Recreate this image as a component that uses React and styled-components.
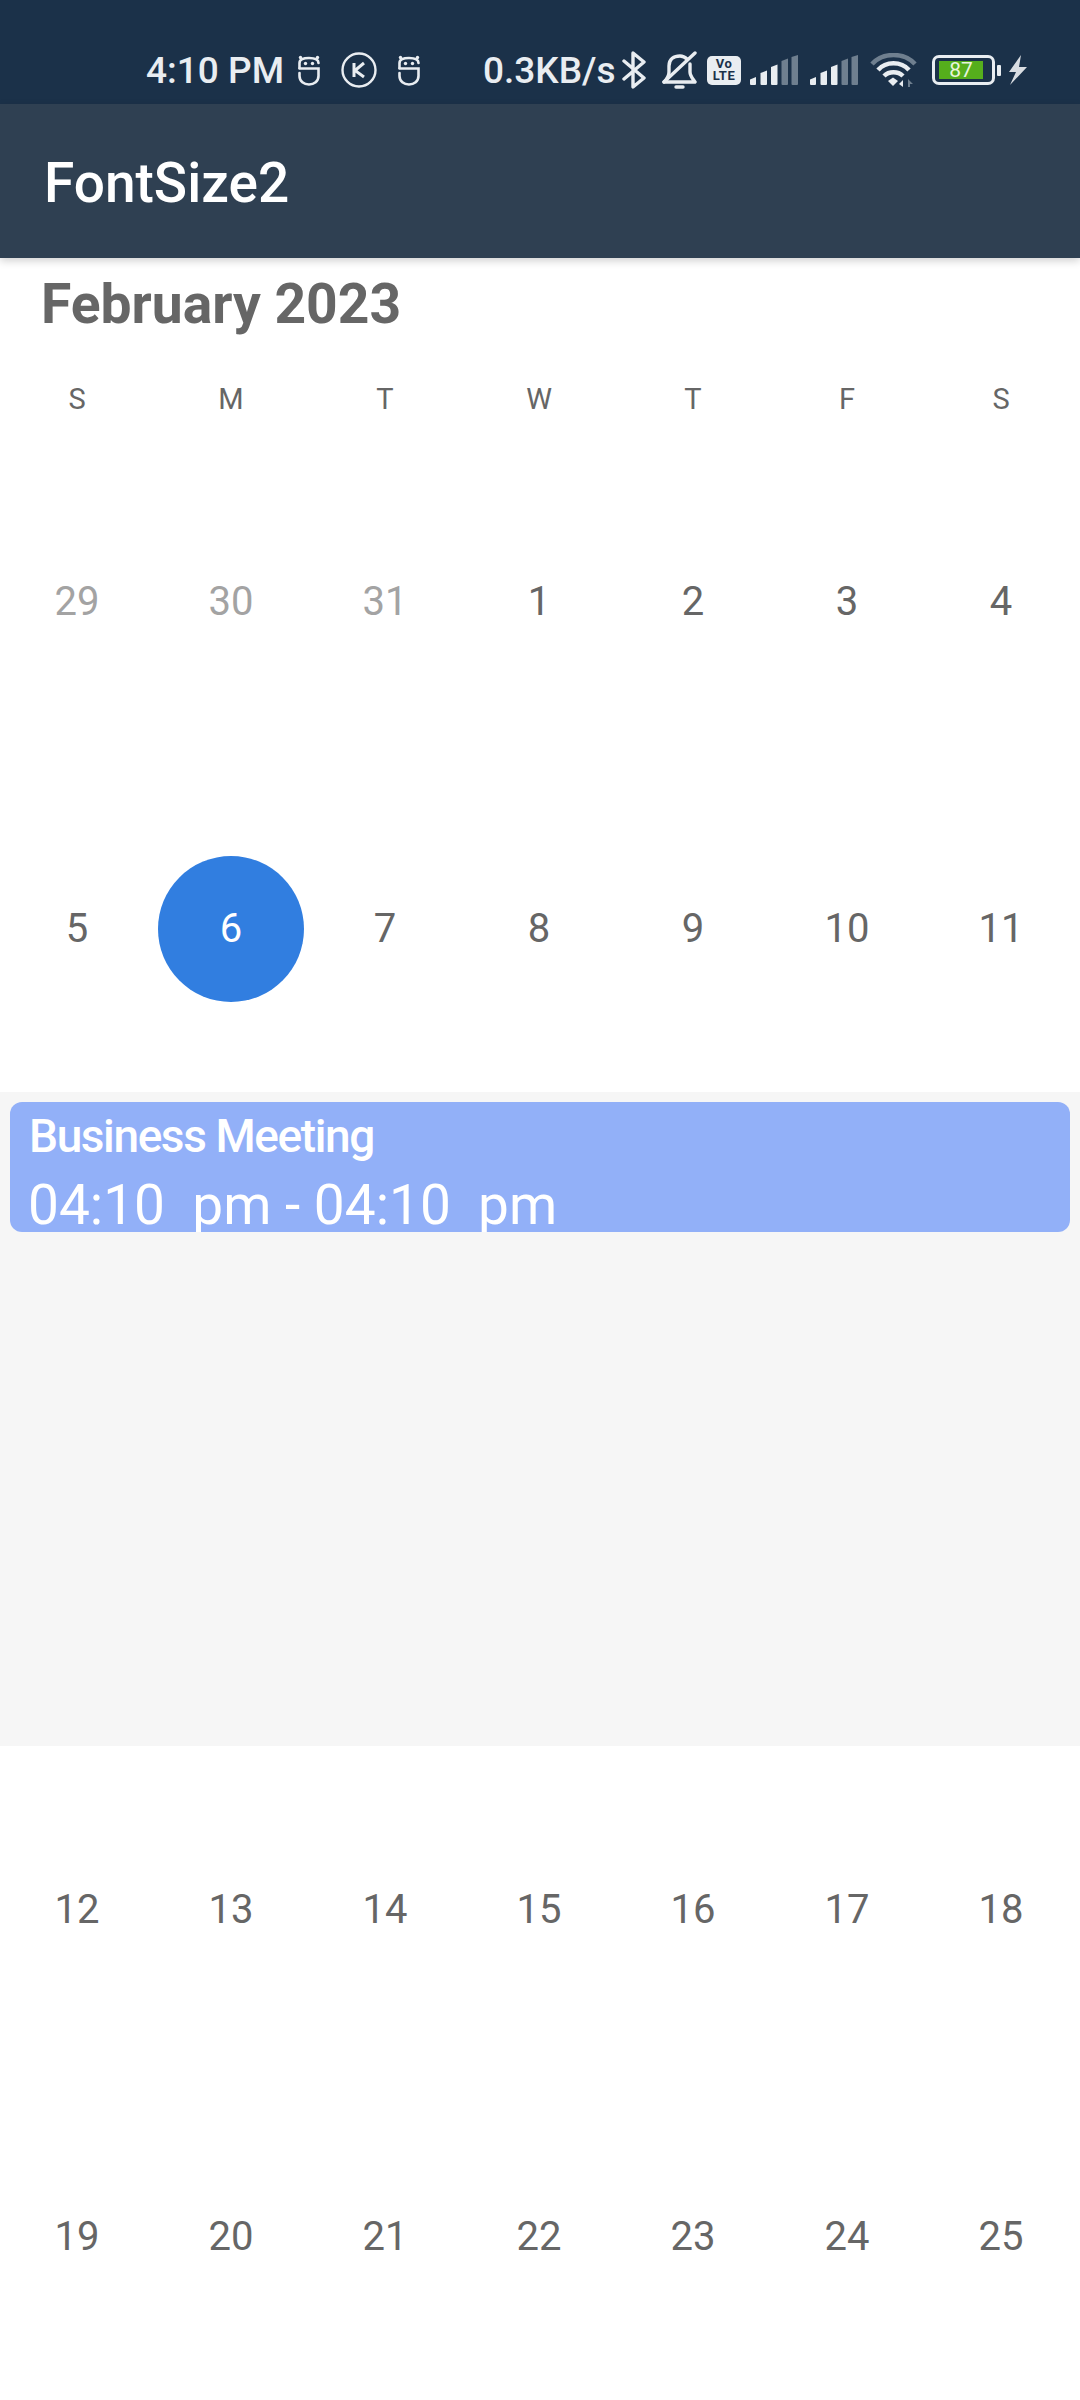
import styled, { createGlobalStyle } from "styled-components";

const Global = createGlobalStyle`
  html, body { margin: 0; padding: 0; background: #fff; }
  body { font-family: Roboto, "Liberation Sans", sans-serif; }
`;

const Page = styled.div`
  width: 1080px;
  height: 2400px;
  overflow: hidden;
  background: #fff;
  display: flex;
  flex-direction: column;
`;

const StatusBar = styled.div`
  height: 104px;
  flex: none;
  background: #1b3149;
  color: #e9edf1;
  display: flex;
  align-items: center;
  padding: 36px 0 0 146px;
  box-sizing: border-box;
  font-size: 37px;
  font-weight: 500;
`;

const Clock = styled.span`
  width: 152px;
  flex: none;
  white-space: nowrap;
`;

const Speed = styled.span`
  flex: none;
  white-space: nowrap;
  width: 139px;
  margin-left: 63px;
`;

const Icon = styled.svg`
  flex: none;
  display: block;
  margin-left: ${(p) => p.$gap || 0}px;
`;

const AppBar = styled.div`
  height: 154px;
  flex: none;
  background: #2f4052;
  color: #fff;
  font-size: 55px;
  font-weight: 500;
  display: flex;
  align-items: center;
  padding: 3px 0 0 44px;
  box-sizing: border-box;
  box-shadow: 0 3px 8px rgba(0, 0, 0, 0.18);
  position: relative;
`;

const Month = styled.div`
  height: 72px;
  flex: none;
  padding: 10px 0 1px 41px;
  font-size: 55.2px;
  line-height: 72px;
  font-weight: 700;
  color: #666;
`;

const WeekRow = styled.div`
  display: grid;
  grid-template-columns: repeat(7, 154px);
  height: 46px;
  margin: 35px 0 16px;
  flex: none;
`;

const WeekDay = styled.div`
  text-align: center;
  font-size: 29px;
  line-height: 46px;
  color: #666;
`;

const DayRow = styled.div`
  display: grid;
  grid-template-columns: repeat(7, 154px);
  height: 327px;
  flex: none;
  align-items: center;
  justify-items: center;
`;

const Day = styled.div`
  width: 146px;
  height: 146px;
  border-radius: 50%;
  display: flex;
  align-items: center;
  justify-content: center;
  font-size: 40px;
  background: ${(p) => (p.$selected ? "#317ee0" : "transparent")};
  color: ${(p) => (p.$selected ? "#fff" : p.$muted ? "#a3a3a3" : "#666")};
`;

const Panel = styled.div`
  height: 654px;
  flex: none;
  background: #f6f6f6;
  padding: 10px 10px 0;
  box-sizing: border-box;
`;

const EventCard = styled.div`
  height: 130px;
  background: #92b0f8;
  border-radius: 12px;
  padding: 9px 0 0 19px;
  box-sizing: border-box;
  color: #fff;
  overflow: hidden;
`;

const EventTitle = styled.div`
  font-size: 46px;
  line-height: 50px;
  font-weight: 500;
  letter-spacing: -1.4px;
`;

const EventTime = styled.div`
  font-size: 55px;
  line-height: 64px;
  margin: 12px 0 0 -1px;
  white-space: pre;
`;

const VoBadge = styled.div`
  width: 34px;
  height: 29px;
  margin-left: 10px;
  flex: none;
  border-radius: 5px;
  background: #e9edf1;
  color: #1b3149;
  font-size: 13px;
  line-height: 12px;
  font-weight: 700;
  letter-spacing: 0.5px;
  text-align: center;
  padding-top: 2px;
  box-sizing: border-box;
`;

const BatteryBody = styled.div`
  width: 63px;
  height: 30px;
  margin-left: 15px;
  flex: none;
  box-sizing: border-box;
  border: 3px solid #e9edf1;
  border-radius: 7px;
  padding: 3px 4px;
  display: flex;
`;

const BatteryFill = styled.div`
  width: 44px;
  height: 18px;
  background: #55ae1c;
  color: #e8f5dc;
  font-size: 21px;
  font-weight: 400;
  line-height: 18px;
  text-align: center;
`;

const BatteryTip = styled.div`
  width: 4px;
  height: 11px;
  margin-left: 2px;
  flex: none;
  background: #e9edf1;
  border-radius: 1px;
`;

const rowsTop = [
  [[29, 1], [30, 1], [31, 1], [1], [2], [3], [4]],
  [[5], [6, 0, 1], [7], [8], [9], [10], [11]],
];
const rowsBottom = [
  [12, 13, 14, 15, 16, 17, 18].map((n) => [n]),
  [19, 20, 21, 22, 23, 24, 25].map((n) => [n]),
];

const Robot = ({ gap }) => (
  <Icon $gap={gap} width="22" height="31" viewBox="0 0 22 31" fill="none" stroke="#e9edf1" strokeWidth="2.6" strokeLinecap="round">
    <path d="M1.5 13 V8 C1.5 4.5 5 3 11 3 C17 3 20.5 4.5 20.5 8" />
    <path d="M1.5 13.5 H20.5 V21 C20.5 26.5 16 29.5 11 29.5 C6 29.5 1.5 26.5 1.5 21 V18" />
    <circle cx="7.5" cy="8.5" r="1.7" fill="#e9edf1" stroke="none" />
    <circle cx="14.5" cy="8.5" r="1.7" fill="#e9edf1" stroke="none" />
    <circle cx="2.5" cy="2.5" r="1.7" fill="#e9edf1" stroke="none" />
    <circle cx="19.5" cy="2.5" r="1.7" fill="#e9edf1" stroke="none" />
  </Icon>
);

// five rising bars, the last two dim
const Signal = ({ gap }) => (
  <Icon $gap={gap} width="48" height="30" viewBox="0 0 48 30">
    <path d="M0 24.5 L6 22 V29 a1 1 0 0 1 -1 1 H1 a1 1 0 0 1 -1 -1 Z" fill="#e9edf1" />
    <path d="M10.5 18 L17 15.5 V29 a1 1 0 0 1 -1 1 H11.5 a1 1 0 0 1 -1 -1 Z" fill="#e9edf1" />
    <path d="M21 12 L27.5 9.5 V29 a1 1 0 0 1 -1 1 H22 a1 1 0 0 1 -1 -1 Z" fill="#e9edf1" />
    <path d="M31.5 6 L38 3.5 V29 a1 1 0 0 1 -1 1 H32.5 a1 1 0 0 1 -1 -1 Z" fill="#6f7f8f" />
    <path d="M41.5 2 L48 0 V29 a1 1 0 0 1 -1 1 H42.5 a1 1 0 0 1 -1 -1 Z" fill="#6f7f8f" />
  </Icon>
);

const Days = ({ rows }) =>
  rows.map((row, i) => (
    <DayRow key={i}>
      {row.map(([n, muted, selected]) => (
        <Day key={n} $muted={muted} $selected={selected}>
          {n}
        </Day>
      ))}
    </DayRow>
  ));

export default function App() {
  return (
    <Page>
      <Global />
      <StatusBar>
        <Clock>4:10 PM</Clock>
        <Robot />
        <Icon $gap={21} width="36" height="36" viewBox="0 0 36 36" fill="none" stroke="#e9edf1" strokeWidth="2.4">
          <circle cx="18" cy="18" r="16.5" />
          <path d="M13 11 V25 M23 11 L14 18.5 L23 25" strokeWidth="3" />
        </Icon>
        <Robot gap={21} />
        <Speed>0.3KB/s</Speed>
        <Icon width="24" height="40" viewBox="0 0 24 40" fill="none" stroke="#e9edf1" strokeWidth="3.4" strokeLinejoin="round" strokeLinecap="round">
          <path d="M2 11 L22 28 L11 37 V3 L22 12 L2 29" />
        </Icon>
        <Icon $gap={16} width="35" height="38" viewBox="0 0 35 38" fill="none" stroke="#e9edf1" strokeWidth="3.4" strokeLinecap="round" strokeLinejoin="round">
          <path d="M7 21 V15 C7 8 12 5 18 5 C21 5 23 6 25 8 M28 13 V21 C28 25 31 28 33 31 H2 C5 28 7 25 7 21" />
          <path d="M2 31 L33 2" />
          <path d="M14 36 H21" />
        </Icon>
        <VoBadge>
          Vo
          <br />
          LTE
        </VoBadge>
        <Signal gap={9} />
        <Signal gap={12} />
        <Icon $gap={12} width="47" height="34" viewBox="0 0 47 34" fill="none" strokeLinecap="butt">
          <path d="M2 11 C13 -1 34 -1 45 11" stroke="#6f7f8f" strokeWidth="4.5" />
          <path d="M8 17 C16 8 31 8 39 17" stroke="#e9edf1" strokeWidth="4.5" />
          <path d="M14 23 C19 18 28 18 33 23" stroke="#e9edf1" strokeWidth="4.5" />
          <path d="M18 28 L23 24.5 L28 28 L23 33 Z" fill="#e9edf1" />
          <path d="M33 34 V27 L29 31 Z" fill="#e9edf1" />
          <path d="M38 34 V26 L43 31 H40 V34 Z" fill="#6f7f8f" />
        </Icon>
        <BatteryBody>
          <BatteryFill>87</BatteryFill>
        </BatteryBody>
        <BatteryTip />
        <Icon $gap={7} width="19" height="30" viewBox="0 0 19 30">
          <path d="M13 0 L1 17 L8 17 L2 30 L19 12 L11 12 Z" fill="#d9dde2" />
        </Icon>
      </StatusBar>
      <AppBar>FontSize2</AppBar>
      <Month>February 2023</Month>
      <WeekRow>
        {["S", "M", "T", "W", "T", "F", "S"].map((d, i) => (
          <WeekDay key={i}>{d}</WeekDay>
        ))}
      </WeekRow>
      <Days rows={rowsTop} />
      <Panel>
        <EventCard>
          <EventTitle>Business Meeting</EventTitle>
          <EventTime>{"04:10  pm - 04:10  pm"}</EventTime>
        </EventCard>
      </Panel>
      <Days rows={rowsBottom} />
    </Page>
  );
}
